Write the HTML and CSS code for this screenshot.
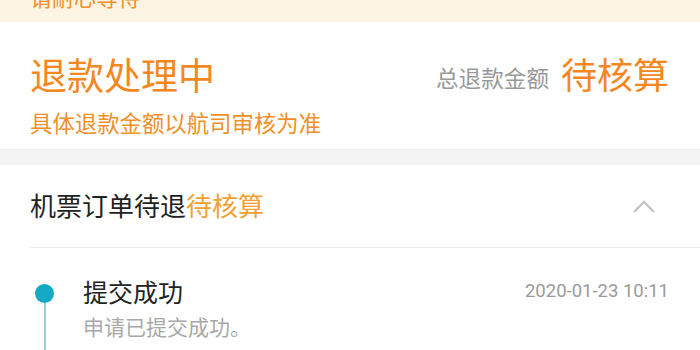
FILE: index.html
```html
<!DOCTYPE html>
<html lang="zh">
<head>
<meta charset="utf-8">
<link rel="stylesheet" href="styles.css">
</head>
<body>
<div class="banner"><span class="banner-text">请耐心等待</span></div>
<section class="status">
  <div class="status-left">
    <div class="status-title">退款处理中</div>
    <div class="status-sub">具体退款金额以航司审核为准</div>
  </div>
  <div class="status-right">
    <span class="total-label">总退款金额</span>
    <span class="total-value">待核算</span>
  </div>
</section>
<div class="gap"></div>
<section class="order">
  <div class="order-head">
    <div class="order-title">机票订单待退<span class="hl">待核算</span></div>
    <svg class="chev" width="24" height="14" viewBox="0 0 24 14"><path d="M2 12 L12 2 L22 12" fill="none" stroke="#c4c4c4" stroke-width="2.4"/></svg>
  </div>
  <div class="timeline">
    <div class="tl-marker"><span class="dot"></span><span class="line"></span></div>
    <div class="tl-body">
      <div class="tl-title">提交成功</div>
      <div class="tl-desc">申请已提交成功。</div>
    </div>
    <div class="tl-time">2020-01-23 10:11</div>
  </div>
</section>
</body>
</html>
```
FILE: styles.css
```css
* { box-sizing: border-box; }
html, body { margin: 0; padding: 0; }
body {
  width: 700px;
  height: 350px;
  overflow: hidden;
  background: #ffffff;
  font-family: "Noto Sans CJK SC", "Noto Sans", sans-serif;
}
.banner {
  height: 22px;
  background: #fef4e4;
  padding-left: 30px;
  overflow: hidden;
}
.banner-text {
  display: block;
  font-size: 22px;
  line-height: 22px;
  color: #f09028;
  margin-top: -15px;
}
.status {
  height: 127px;
  display: flex;
  justify-content: space-between;
  padding: 0 31px 0 30px;
}
.status-left { padding-top: 27px; }
.status-title {
  font-size: 37px;
  line-height: 50px;
  color: #f5871f;
}
.status-sub {
  margin-top: 9px;
  font-size: 22.4px;
  line-height: 28px;
  color: #f09028;
}
.status-right {
  display: flex;
  align-items: center;
  height: 50px;
  margin-top: 26px;
}
.total-label {
  font-size: 22.6px;
  color: #999999;
  margin-right: 12px;
  margin-top: 8px;
}
.total-value {
  font-size: 36px;
  color: #f5871f;
}
.gap {
  height: 16px;
  background: #f3f3f3;
  border-top: 1px solid #ececec;
}
.order-head {
  height: 83px;
  margin-left: 30px;
  border-bottom: 1px solid #ebebeb;
  display: flex;
  align-items: center;
  justify-content: space-between;
  padding-right: 44px;
  padding-bottom: 4px;
}
.order-title {
  font-size: 26px;
  color: #222222;
}
.hl { color: #f2a030; }
.chev { margin-top: 6px; }
.timeline {
  display: flex;
  padding: 28px 31px 0 35px;
}
.tl-marker {
  width: 19px;
  display: flex;
  flex-direction: column;
  align-items: center;
  padding-top: 8px;
}
.dot {
  width: 19px;
  height: 19px;
  border-radius: 50%;
  background: #15aac4;
  flex: none;
}
.line {
  width: 2px;
  height: 60px;
  background: #8fd0da;
}
.tl-body {
  flex: 1;
  margin-left: 29px;
}
.tl-title {
  font-size: 25px;
  line-height: 30px;
  color: #222222;
}
.tl-desc {
  font-size: 21px;
  line-height: 30px;
  color: #a8a8a8;
  margin-top: 5px;
}
.tl-time {
  font-family: Roboto, "Noto Sans", sans-serif;
  font-size: 18.5px;
  line-height: 20px;
  color: #9a9a9a;
  padding-top: 5px;
}
```
